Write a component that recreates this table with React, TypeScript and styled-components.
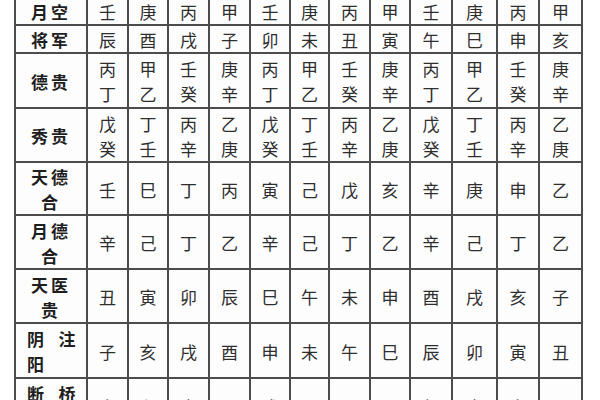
import React from "react";
import styled, { createGlobalStyle } from "styled-components";

const GlobalStyle = createGlobalStyle`
  html, body {
    margin: 0;
    padding: 0;
    background: #ffffff;
    overflow: hidden;
  }
  body {
    width: 600px;
    height: 400px;
    font-family: "Noto Sans CJK SC", "Noto Sans", sans-serif;
  }
`;

const colWidths = [70, 39, 38, 39, 39, 38, 37, 39, 38, 40, 43, 40, 41];
const rowHeights = [26, 26, 53, 52, 51, 52, 52, 53, 53];

const Page = styled.div`
  width: 600px;
  height: 400px;
  overflow: hidden;
  background: #fff;
`;

const Table = styled.div`
  display: inline-grid;
  grid-template-columns: ${colWidths.map((w) => `${w}px`).join(" ")};
  grid-template-rows: ${rowHeights.map((h) => `${h}px`).join(" ")};
  gap: 2px;
  padding: 2px;
  margin: -6px 0 0 14px;
  background: #4c4c4c;
`;

const Cell = styled.div`
  background: #fdfdfd;
  display: flex;
  flex-direction: column;
  align-items: center;
  justify-content: center;
  padding-top: 2px;
  box-sizing: border-box;
  color: #2e2e2e;
  font-size: 17px;
  line-height: 25px;
  font-weight: 400;
`;

const Label = styled.div<{ $left?: boolean }>`
  background: #fdfdfd;
  display: flex;
  flex-direction: column;
  align-items: ${(p) => (p.$left ? "flex-start" : "center")};
  justify-content: center;
  padding: 2px 0 0 ${(p) => (p.$left ? "11px" : "0")};
  box-sizing: border-box;
  color: #1e1e1e;
  font-size: 17px;
  line-height: 25px;
  font-weight: 700;
  letter-spacing: 3px;
`;

const Line = styled.span`
  display: block;
  white-space: pre;
`;

type Row = { label: string[]; left?: boolean; cells: string[] };

const rows: Row[] = [
  { label: ["月空"], cells: "壬庚丙甲壬庚丙甲壬庚丙甲".split("") },
  { label: ["将军"], cells: "辰酉戌子卯未丑寅午巳申亥".split("") },
  {
    label: ["德贵"],
    cells: ["丙丁", "甲乙", "壬癸", "庚辛", "丙丁", "甲乙", "壬癸", "庚辛", "丙丁", "甲乙", "壬癸", "庚辛"],
  },
  {
    label: ["秀贵"],
    cells: ["戊癸", "丁壬", "丙辛", "乙庚", "戊癸", "丁壬", "丙辛", "乙庚", "戊癸", "丁壬", "丙辛", "乙庚"],
  },
  { label: ["天德", "合"], cells: "壬巳丁丙寅己戊亥辛庚申乙".split("") },
  { label: ["月德", "合"], cells: "辛己丁乙辛己丁乙辛己丁乙".split("") },
  { label: ["天医", "贵"], cells: "丑寅卯辰巳午未申酉戌亥子".split("") },
  { label: ["阴\u2002注", "阳"], left: true, cells: "子亥戌酉申未午巳辰卯寅丑".split("") },
  { label: ["断\u2002桥", "关"], left: true, cells: "寅卯申丑戌酉辰巳午未亥子".split("") },
];

export default function App() {
  return (
    <Page>
      <GlobalStyle />
      <Table>
        {rows.map((row, ri) => (
          <React.Fragment key={ri}>
            <Label $left={row.left}>
              {row.label.map((l, i) => (
                <Line key={i}>{l}</Line>
              ))}
            </Label>
            {row.cells.map((c, ci) => (
              <Cell key={ci}>
                {c.split("").map((ch, i) => (
                  <Line key={i}>{ch}</Line>
                ))}
              </Cell>
            ))}
          </React.Fragment>
        ))}
      </Table>
    </Page>
  );
}
